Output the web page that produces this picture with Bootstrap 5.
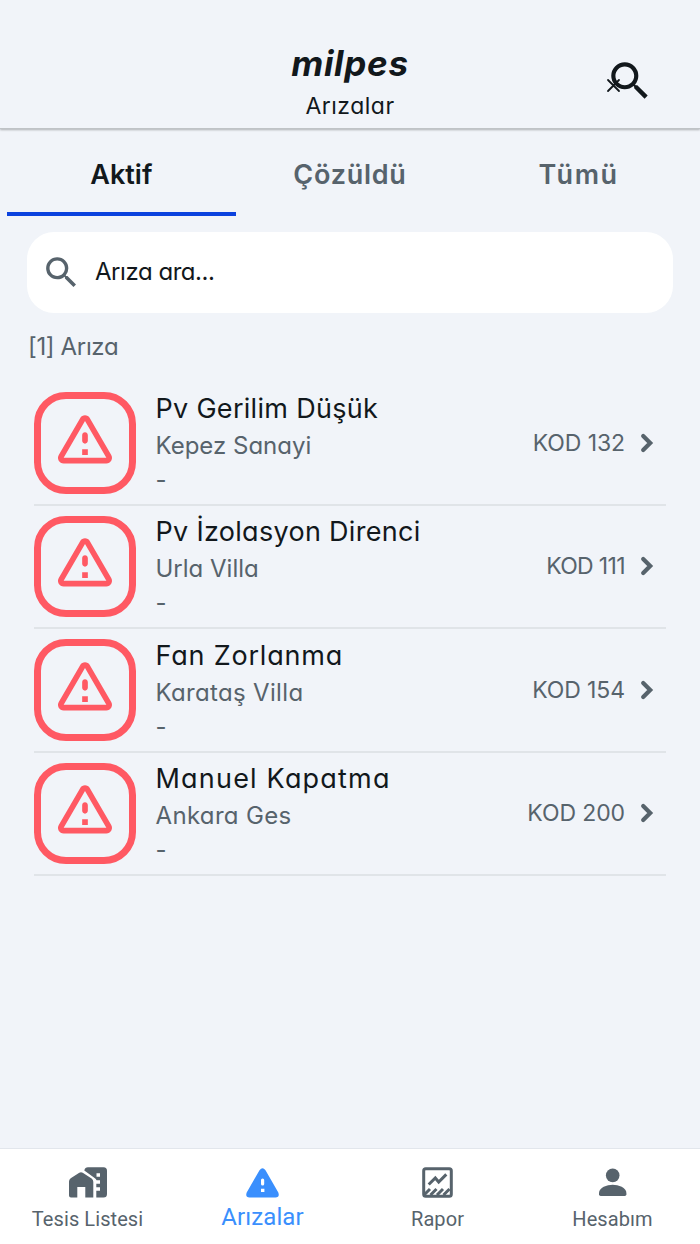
<!DOCTYPE html>
<html lang="tr">
<head>
<meta charset="utf-8">
<meta name="viewport" content="width=device-width, initial-scale=1">
<title>milpes - Arızalar</title>
<link href="https://cdn.jsdelivr.net/npm/bootstrap@5.3.0/dist/css/bootstrap.min.css" rel="stylesheet">
<style>
  :root { --ink: #12181c; --muted: #57636c; --page: #f1f4f9; --alarm: #ff5963; }
  body { background: var(--page); color: var(--ink); font-family: Inter, sans-serif; font-feature-settings: "cv11", "calt" 0; height: 1244px; overflow: hidden; }
  svg { display: block; flex: none; }
  .muted { color: var(--muted); }
  .app-head { height: 129px; padding-top: 40px; border-bottom: 1px solid #bfc3c6; box-shadow: 0 1px 2px rgba(0,0,0,.28); }
  .brand { font-size: 35px; line-height: 46px; font-weight: 700; font-style: italic; letter-spacing: .7px; }
  .page-name { font-size: 23px; line-height: 40px; letter-spacing: .5px; }
  .head-search { right: 45px; top: 56px; }
  .head-x { left: 1px; top: 22px; }
  .app-tabs { height: 87px; padding: 0 7px; }
  .app-tabs .nav-link { width: 33.333%; padding: 0; font-size: 27px; line-height: 92px; font-weight: 600; color: var(--muted); text-align: center; border-bottom: 4px solid transparent; height: 87px; }
  .app-tabs .nav-link.active { color: var(--ink); border-color: #0b42de; }
  .tab-solved { letter-spacing: .75px; }
  .tab-all { letter-spacing: 1.6px; }
  .search-box { margin: 16px 27px 0; height: 81px; border-radius: 27px; padding-left: 13.500px; gap: 13.500px; font-size: 24px; letter-spacing: -.45px; }
  .search-box span { padding-bottom: 2px; }
  .count { margin: 15px 28px 0; height: 38px; line-height: 38px; font-size: 24px; letter-spacing: -.35px; }
  .faults { margin: 16px 34px 0; }
  .fault { height: 123.500px; border-bottom: 2px solid #e0e4e8; }
  .alarm-box { width: 101.500px; height: 101.500px; border: 7px solid var(--alarm); border-radius: 32px; color: var(--alarm); margin-right: 20px; padding-bottom: 10px; flex: none; }
  .fault-title { font-size: 27px; line-height: 38px; letter-spacing: .3px; }
  .fault-title.wide { letter-spacing: .8px; }
  .fault-title.wider { letter-spacing: 1.200px; }
  .fault-site { font-size: 24px; line-height: 35px; }
  .fault-site.wide { letter-spacing: .33px; }
  .fault-date { font-size: 24px; line-height: 33px; }
  .code { font-size: 23px; margin-right: 14.500px; letter-spacing: -.1px; }
  .code.narrow { letter-spacing: -.65px; }
  .fault-chev { margin-right: 12.500px; }
  .app-nav { height: 96px; border-top: 1px solid #e2e6ec; font-family: Roboto, sans-serif; font-size: 20px; color: var(--muted); }
  .app-nav .item { width: 25%; padding-top: 18px; }
  .app-nav .label-text { line-height: 24px; margin-top: 9px; letter-spacing: .08px; }
  .app-nav .current { color: #3a8ffd; font-size: 24px; }
  .app-nav .current .label-text { margin-top: 7px; }
</style>
</head>
<body class="d-flex flex-column">
<svg class="d-none" aria-hidden="true">
  <symbol id="search" viewBox="0 0 24 24"><path fill="currentColor" d="M15.5 14h-.79l-.28-.27A6.47 6.47 0 0 0 16 9.5 6.5 6.5 0 1 0 9.5 16c1.61 0 3.09-.59 4.23-1.57l.27.28v.79l5 4.99L20.49 19l-4.99-5zm-6 0C7.01 14 5 11.99 5 9.500S7.010 5 9.500 5 14 7.010 14 9.500 11.990 14 9.500 14z"/></symbol>
  <symbol id="alarm" viewBox="0 0 24 24"><path fill="currentColor" d="M12 5.99 19.53 19H4.470L12 5.990M2.740 18c-.77 1.330.19 3 1.730 3h15.060c1.540 0 2.500-1.670 1.730-3L13.730 4.990c-.77-1.330-2.690-1.330-3.460 0L2.740 18zM11 11v2c0 .55.45 1 1 1s1-.45 1-1v-2c0-.55-.45-1-1-1s-1 .45-1 1zm0 5h2v2h-2z"/></symbol>
  <symbol id="chev" viewBox="0 0 14 20"><path d="M3.200 3 10.200 10l-7 7" fill="none" stroke="currentColor" stroke-width="4.200" stroke-linecap="round"/></symbol>
</svg>

<header class="app-head position-relative text-center flex-shrink-0">
  <div class="brand">milpes</div>
  <div class="page-name">Arızalar</div>
  <div class="head-search position-absolute">
    <svg width="50" height="50"><use href="#search"/></svg>
    <svg class="head-x position-absolute" width="15" height="15" viewBox="0 0 15 15"><path d="M2 2l11 11M13 2 2 13" stroke="currentColor" stroke-width="1.800" stroke-linecap="round"/></svg>
  </div>
</header>

<nav class="app-tabs nav flex-nowrap flex-shrink-0">
  <a class="nav-link active">Aktif</a>
  <a class="nav-link tab-solved">Çözüldü</a>
  <a class="nav-link tab-all">Tümü</a>
</nav>

<div class="search-box bg-white d-flex align-items-center flex-shrink-0">
  <svg class="muted" width="41" height="41"><use href="#search"/></svg>
  <span>Arıza ara...</span>
</div>
<div class="count muted">[1] Arıza</div>

<main class="faults flex-grow-1">
  <div class="fault d-flex align-items-center">
    <div class="alarm-box d-flex align-items-center justify-content-center"><svg width="68" height="68"><use href="#alarm"/></svg></div>
    <div class="flex-grow-1"><div class="fault-title">Pv Gerilim Düşük</div><div class="fault-site muted">Kepez Sanayi</div><div class="fault-date muted">-</div></div>
    <span class="code muted">KOD 132</span><svg class="fault-chev muted" width="14" height="20"><use href="#chev"/></svg>
  </div>
  <div class="fault d-flex align-items-center">
    <div class="alarm-box d-flex align-items-center justify-content-center"><svg width="68" height="68"><use href="#alarm"/></svg></div>
    <div class="flex-grow-1"><div class="fault-title">Pv İzolasyon Direnci</div><div class="fault-site muted">Urla Villa</div><div class="fault-date muted">-</div></div>
    <span class="code narrow muted">KOD 111</span><svg class="fault-chev muted" width="14" height="20"><use href="#chev"/></svg>
  </div>
  <div class="fault d-flex align-items-center">
    <div class="alarm-box d-flex align-items-center justify-content-center"><svg width="68" height="68"><use href="#alarm"/></svg></div>
    <div class="flex-grow-1"><div class="fault-title wide">Fan Zorlanma</div><div class="fault-site wide muted">Karataş Villa</div><div class="fault-date muted">-</div></div>
    <span class="code muted">KOD 154</span><svg class="fault-chev muted" width="14" height="20"><use href="#chev"/></svg>
  </div>
  <div class="fault d-flex align-items-center">
    <div class="alarm-box d-flex align-items-center justify-content-center"><svg width="68" height="68"><use href="#alarm"/></svg></div>
    <div class="flex-grow-1"><div class="fault-title wider">Manuel Kapatma</div><div class="fault-site wide muted">Ankara Ges</div><div class="fault-date muted">-</div></div>
    <span class="code muted">KOD 200</span><svg class="fault-chev muted" width="14" height="20"><use href="#chev"/></svg>
  </div>
</main>

<footer class="app-nav bg-white d-flex flex-shrink-0">
  <div class="item d-flex flex-column align-items-center">
    <svg width="38" height="31" viewBox="0 0 38 31" fill="currentColor"><path d="M0 14.500q0-2 1.700-3.200L10.300 5.800q1.700-1 3.400 0l8.900 5.800q1.700 1.200 1.700 3.200V30.500H16.300V20h-8v10.500H2q-2 0-2-2z"/><path fill-rule="evenodd" d="M15.300 3.500Q16 .3 19 .3H34.500Q38 .3 38 3.800V27q0 3.500-3.500 3.500H27.300V23.800H31V20.300H27.300V16.700H31V13.200H27.600Q27 12 25.600 11zM27.500 6.200V9.700H31V6.200z"/></svg>
    <div class="label-text">Tesis Listesi</div>
  </div>
  <div class="item current d-flex flex-column align-items-center">
    <svg width="33" height="31" viewBox="0 0 33 31"><path fill="currentColor" fill-rule="evenodd" d="M13.500 3.300q3-4 6 0L32.300 25.500Q34 30.300 29.500 30.500h-26Q-1 30.300.7 25.500zM15 13v4q0 1.600 1.600 1.600T18.200 17v-4q0-1.600-1.600-1.600T15 13zm0 8.700V25h3.400v-3.300z"/></svg>
    <div class="label-text">Arızalar</div>
  </div>
  <div class="item d-flex flex-column align-items-center">
    <svg width="31" height="31" viewBox="0 0 31 31" fill="none" stroke="currentColor" stroke-width="3"><rect x="1.700" y="1.700" width="27.600" height="27.600" rx="2"/><path d="M6.700 17.500 13.300 11l3.400 4L24.300 7.400"/><path d="M2 28l6-6M8.500 28l6-6M15 28l6-6M21.500 28l6-6" stroke-width="3"/></svg>
    <div class="label-text">Rapor</div>
  </div>
  <div class="item d-flex flex-column align-items-center">
    <svg width="28" height="31" viewBox="0 0 28 31" fill="currentColor"><circle cx="13.700" cy="8.400" r="6.800"/><path d="M0 26c0-5.500 8-8.300 13.700-8.300S27.400 20.500 27.400 26v1.300q0 1.700-1.700 1.700H1.700Q0 29 0 27.300z"/></svg>
    <div class="label-text">Hesabım</div>
  </div>
</footer>
<script src="https://cdn.jsdelivr.net/npm/bootstrap@5.3.0/dist/js/bootstrap.bundle.min.js"></script>
</body>
</html>
